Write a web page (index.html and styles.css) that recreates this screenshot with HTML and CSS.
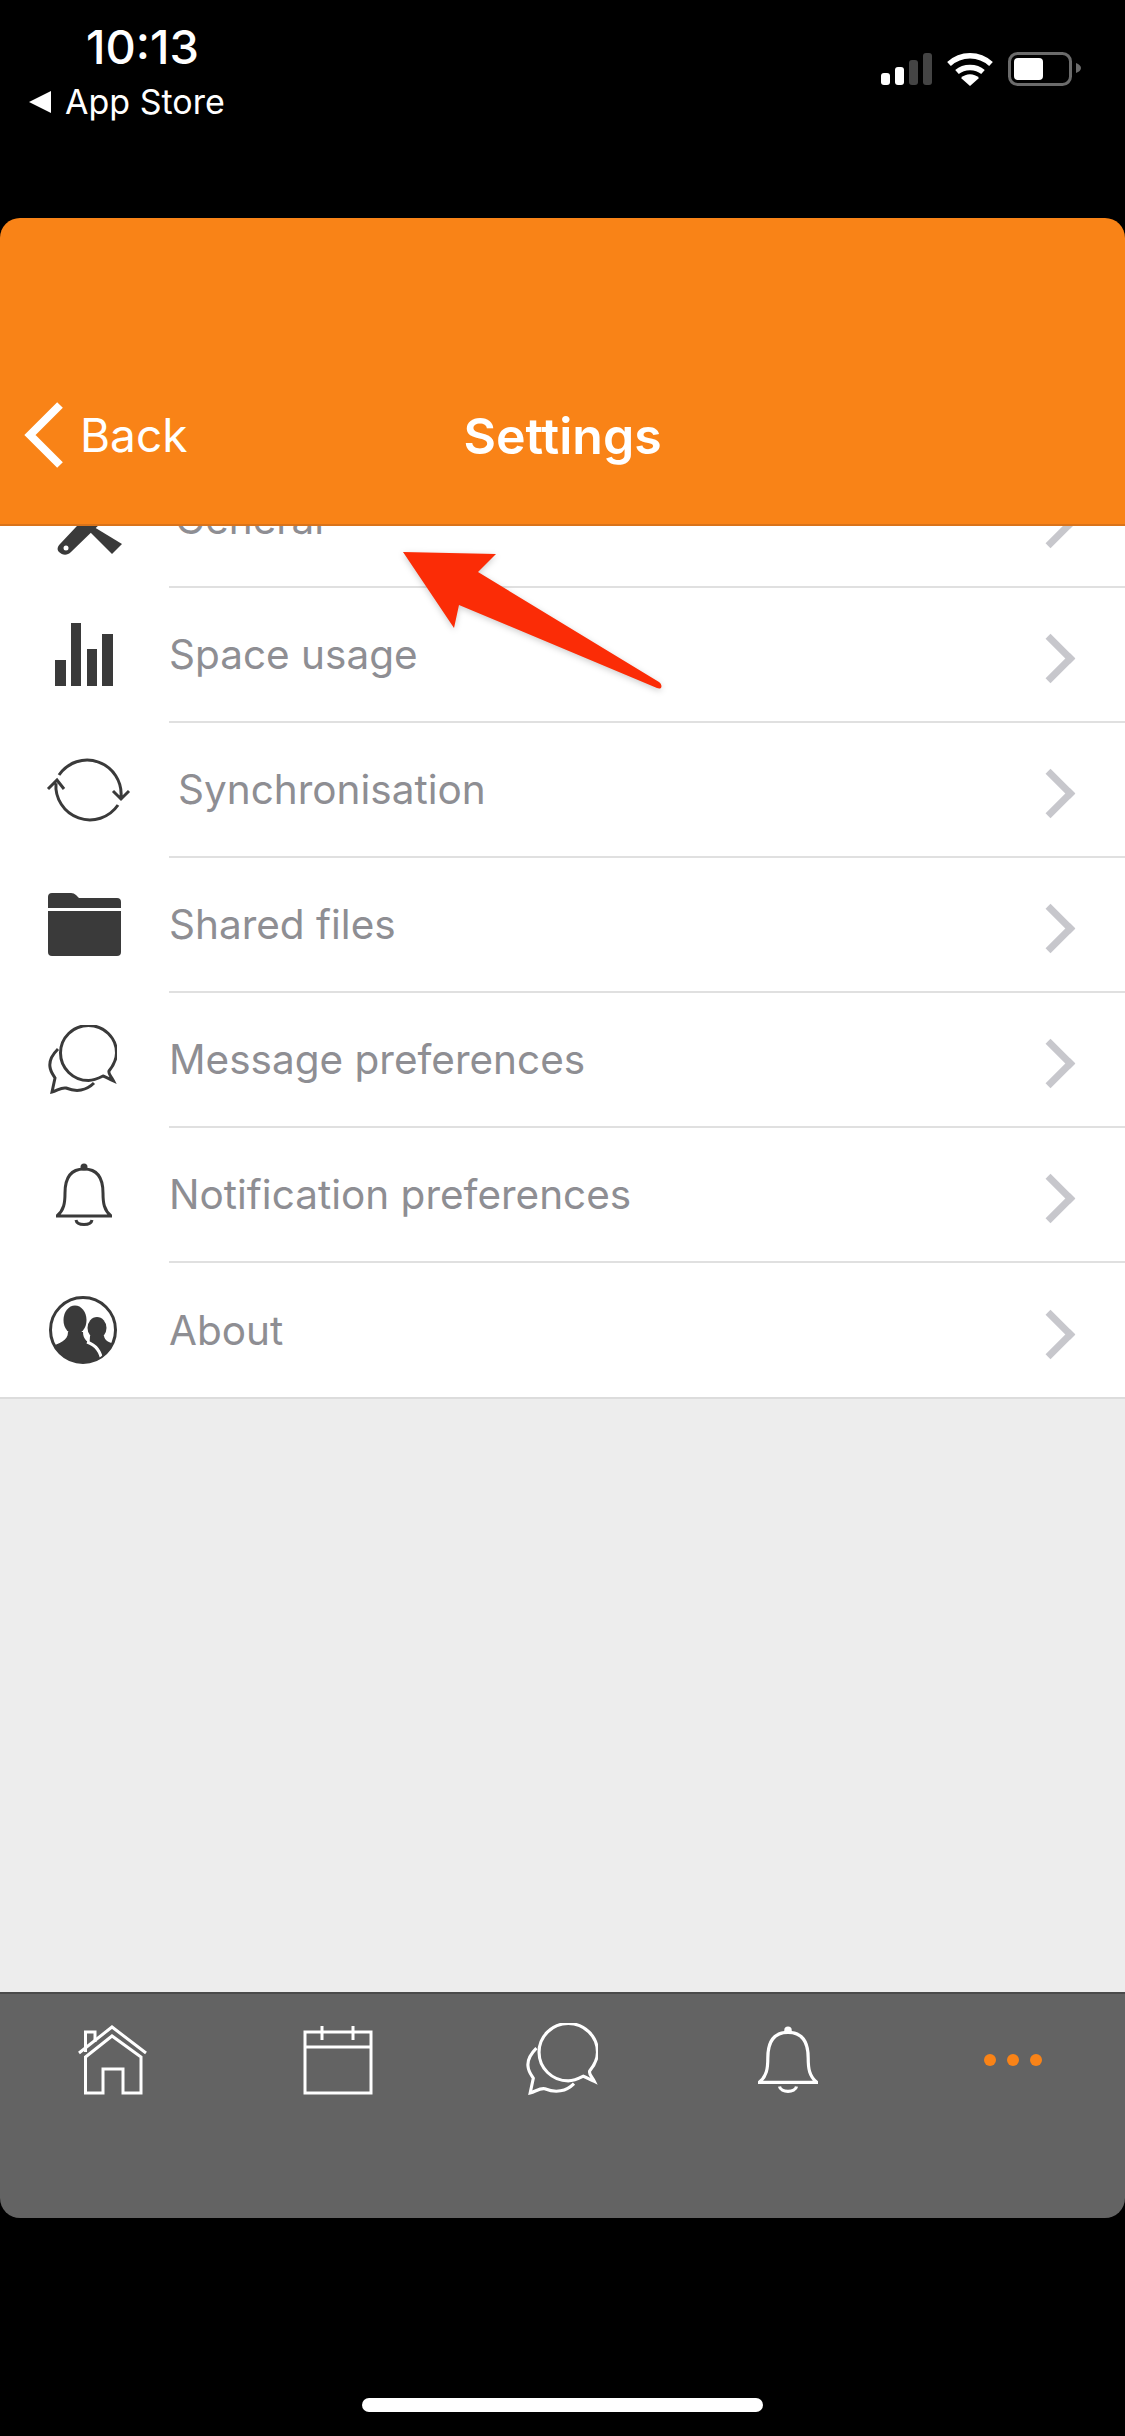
FILE: index.html
```html
<!DOCTYPE html>
<html lang="en">
<head>
  <meta charset="UTF-8">
  <title>Settings</title>
  <link rel="stylesheet" href="styles.css">
</head>
<body>

  <svg class="defs" width="0" height="0">
    <symbol id="msg" viewBox="-1 -1 69 69">
      <path d="M60 45C59 48 62 50 64.5 55C60 53 57 51 54 50C50 52 45 54.5 39.5 54.5A28 27.5 0 1 1 67.5 27C67.5 34 64 40 60 45Z"/>
      <path d="M9 23C3 29 0 35 1 41C1.5 46 5 50 6 52L3 66C8 65 12 61 17 62C22 64 27 65 32 64C37 63 42 60 45 57"/>
    </symbol>
    <symbol id="bell" viewBox="0 0 56 64">
      <path d="M1 53C8 47 9 40 9 30C9 14 15 6 28 6C41 6 47 14 47 30C47 40 48 47 55 53Z"/>
      <path d="M20 57C21 63 35 63 36 57"/>
      <circle class="solid" cx="28" cy="4" r="3.5"/>
    </symbol>
  </svg>

  <div class="telefono">
    <!-- Barra de estado -->
    <div class="estado">
      <div class="estado-izq">
        <div class="hora">10:13</div>
        <div class="volver-tienda"><span class="triangulo"></span>App Store</div>
      </div>
      <svg class="estado-iconos" viewBox="881 50 200 38">
        <rect x="881" y="73" width="9" height="12" rx="3" fill="#fff"/>
        <rect x="895" y="67" width="9" height="18" rx="3" fill="#fff"/>
        <rect x="909" y="60" width="9" height="25" rx="3" fill="#444"/>
        <rect x="923" y="53" width="9" height="32" rx="3" fill="#444"/>
        <path d="M949 64C961 53 979 53 991 64" fill="none" stroke="#fff" stroke-width="5.5"/>
        <path d="M957 72C964 66 976 66 983 72" fill="none" stroke="#fff" stroke-width="5.5"/>
        <path d="M961 78C966 73 974 73 979 78L970 86Z" fill="#fff"/>
        <rect x="1009.5" y="53.5" width="61" height="31" rx="8" fill="none" stroke="#6b6b6b" stroke-width="3"/>
        <rect x="1014" y="58" width="29" height="22" rx="4" fill="#fff"/>
        <path d="M1076 63C1079 64 1081 66 1081 68C1081 70 1079 72 1076 73Z" fill="#6b6b6b"/>
      </svg>
    </div>

    <!-- Cabecera -->
    <div class="cabecera">
      <div class="atras">
        <svg class="atras-flecha" viewBox="0 0 44 68">
          <path d="M38 4L8 34L38 64" fill="none" stroke="#fff" stroke-width="8"/>
        </svg>
        <span>Back</span>
      </div>
      <h1>Settings</h1>
    </div>

    <!-- Lista de ajustes, desplazada hacia arriba -->
    <div class="lista">
      <div class="lista-interior">
        <div class="fila">
          <svg class="fila-icono" viewBox="0 453 169 135">
            <path class="oscuro" d="M94 527L122 544L112 554L80 522Z"/>
            <path class="oscuro" d="M60 544L92 510L104 520L71 552C67 556 62 555 59 552C57 550 57 547 60 544Z"/>
            <circle cx="66" cy="548" r="2.5" fill="#fff"/>
          </svg>
          <div class="fila-texto fila-general"><span>General</span></div>
        </div>
        <div class="fila">
          <svg class="fila-icono" viewBox="0 588 169 135">
            <rect class="oscuro" x="55" y="660" width="11" height="26"/>
            <rect class="oscuro" x="71" y="623" width="10" height="63"/>
            <rect class="oscuro" x="87" y="649" width="10" height="37"/>
            <rect class="oscuro" x="102" y="634" width="11" height="52"/>
          </svg>
          <div class="fila-texto"><span>Space usage</span></div>
        </div>
        <div class="fila">
          <svg class="fila-icono" viewBox="0 723 169 135">
            <g class="linea fina">
              <path d="M59 775A34 34 0 0 1 121 797M113 791L121 799L129 791"/>
              <path d="M118 805A34 34 0 0 1 56 783M48 789L57 780L64 789"/>
            </g>
          </svg>
          <div class="fila-texto fila-sync"><span>Synchronisation</span></div>
        </div>
        <div class="fila">
          <svg class="fila-icono" viewBox="0 858 169 135">
            <path class="oscuro" d="M48 908V897Q48 893 52 893H71Q74 893 76 895L79 898H117Q121 898 121 902V908Z"/>
            <path class="oscuro" d="M48 911H121V952Q121 956 117 956H52Q48 956 48 952Z"/>
          </svg>
          <div class="fila-texto"><span>Shared files</span></div>
        </div>
        <div class="fila">
          <svg class="fila-icono" viewBox="0 993 169 135">
            <use class="linea fina" href="#msg" x="48" y="1025" width="69" height="69"/>
          </svg>
          <div class="fila-texto"><span>Message preferences</span></div>
        </div>
        <div class="fila">
          <svg class="fila-icono" viewBox="0 1128 169 135">
            <use class="linea fina" href="#bell" x="56" y="1163" width="56" height="64"/>
          </svg>
          <div class="fila-texto"><span>Notification preferences</span></div>
        </div>
        <div class="fila fila-ultima">
          <svg class="fila-icono" viewBox="0 1263 169 135">
            <defs>
              <clipPath id="recorte"><circle cx="83" cy="1330" r="32"/></clipPath>
            </defs>
            <circle class="linea fina" cx="83" cy="1330" r="32.5"/>
            <g clip-path="url(#recorte)">
              <ellipse class="oscuro" cx="97" cy="1328" rx="9.5" ry="11"/>
              <path class="oscuro" d="M90 1336H104C105 1342 112 1343 118 1346V1366H88Z"/>
              <ellipse class="oscuro" cx="75" cy="1320" rx="11.5" ry="14.5"/>
              <path class="oscuro" d="M68 1332H83C83 1340 88 1342 93 1345C98 1348 101 1354 101 1366H45V1350C52 1344 68 1344 68 1332Z"/>
              <path d="M87 1342C96 1345 101 1352 102 1362" fill="none" stroke="#fff" stroke-width="3"/>
            </g>
          </svg>
          <div class="fila-texto"><span>About</span></div>
        </div>
      </div>
    </div>

    <div class="vacio"></div>

    <!-- Barra de pestañas -->
    <div class="pestanas">
      <svg class="pestana" viewBox="62 2010 100 100">
        <g class="linea blanca">
          <path d="M78 2053L111 2027L145 2053"/>
          <path d="M84.500 2057L111 2036L140 2057V2093H122V2069H102V2093H84.500Z"/>
          <path d="M84.500 2052V2032H94V2042"/>
        </g>
      </svg>
      <svg class="pestana" viewBox="287 2010 100 100">
        <g class="linea blanca">
          <rect x="304" y="2032" width="66" height="61"/>
          <path d="M304 2047H370M321 2026V2040M352 2026V2040"/>
        </g>
      </svg>
      <svg class="pestana" viewBox="512 2010 100 100">
        <use class="linea blanca" href="#msg" x="525" y="2023" width="72" height="72"/>
      </svg>
      <svg class="pestana" viewBox="737 2010 100 100">
        <use class="linea blanca" href="#bell" x="757" y="2026" width="60" height="68"/>
      </svg>
      <svg class="pestana" viewBox="962 2010 100 100">
        <circle cx="989" cy="2060" r="6" fill="#f98317"/>
        <circle cx="1012" cy="2060" r="6" fill="#f98317"/>
        <circle cx="1035" cy="2060" r="6" fill="#f98317"/>
      </svg>
    </div>

    <div class="pie"><div class="inicio"></div></div>

    <!-- Flecha roja encima de la captura -->
    <svg class="flecha-roja" viewBox="0 0 280 160">
      <path d="M2 2L95 4L77 22L258 132C262 135 261 140 256 138L58 55L53 78Z" fill="#fb2c06"/>
    </svg>
  </div>

</body>
</html>
```

FILE: styles.css
```css
* {
  box-sizing: border-box;
}

body {
  margin: 0;
  background-color: #000;
  font-family: Inter, "Liberation Sans", sans-serif;
}

.defs {
  position: absolute;
}

.telefono {
  position: relative;
  display: flex;
  flex-direction: column;
  height: 2436px;
  overflow: hidden;
}

/* Barra de estado */
.estado {
  display: flex;
  justify-content: space-between;
  height: 218px;
  color: #fff;
}

.estado-izq {
  padding: 23px 0 0 29px;
}

.hora {
  margin-left: 57px;
  font-size: 47px;
  line-height: 48px;
  font-weight: 500;
}

.volver-tienda {
  display: flex;
  align-items: center;
  margin-top: 11px;
  font-size: 34px;
  line-height: 40px;
}

.triangulo {
  width: 0;
  height: 0;
  margin-right: 14px;
  border-top: 11px solid transparent;
  border-bottom: 11px solid transparent;
  border-right: 22px solid #fff;
}

.estado-iconos {
  width: 200px;
  height: 38px;
  margin: 50px 44px 0 0;
}

/* Cabecera */
.cabecera {
  position: relative;
  display: flex;
  align-items: center;
  justify-content: center;
  height: 308px;
  padding-top: 130px;
  padding-bottom: 0;
  background-color: #f98317;
  border-radius: 20px 20px 0 0;
  border-bottom: 2px solid #d9731a;
  color: #fff;
}

.cabecera h1 {
  margin: 0;
  font-size: 50px;
  font-weight: 600;
}

.atras {
  position: absolute;
  left: 22px;
  bottom: 55px;
  display: flex;
  align-items: center;
  gap: 14px;
  font-size: 46px;
}

.atras-flecha {
  width: 44px;
  height: 68px;
}

/* Lista */
.lista {
  height: 873px;
  overflow: hidden;
  background-color: #fff;
  border-bottom: 2px solid #dcdcdc;
}

.lista-interior {
  margin-top: -73px;
}

.fila {
  display: flex;
  height: 135px;
}

.fila-icono {
  flex: none;
  width: 169px;
  height: 135px;
}

.fila-texto {
  position: relative;
  flex: 1;
  display: flex;
  align-items: center;
  border-bottom: 2px solid #e0e0e0;
  color: #8e8e93;
  font-size: 40.5px;
}

.fila-texto::after {
  content: "";
  position: absolute;
  right: 57px;
  top: 50%;
  width: 28px;
  height: 28px;
  margin-top: -14px;
  border-top: 7px solid #c7c7cc;
  border-right: 7px solid #c7c7cc;
  transform: rotate(45deg);
}

.fila-general {
  padding-left: 6px;
}

.fila-sync {
  padding-left: 9px;
}

.fila-ultima .fila-texto {
  border-bottom: none;
}

/* Iconos */
.oscuro {
  fill: #3a3a3a;
}

.linea {
  fill: none;
  stroke: #3a3a3a;
  stroke-width: 4;
}

.linea.fina {
  stroke-width: 3;
  color: #3a3a3a;
}

.solid {
  fill: currentColor;
  stroke: none;
}

.linea.blanca {
  stroke: #fff;
  stroke-width: 3;
  color: #fff;
}

.vacio {
  flex: 1;
  background-color: #ededed;
}

/* Pestañas */
.pestanas {
  display: grid;
  grid-template-columns: repeat(5, 1fr);
  justify-items: center;
  align-items: start;
  height: 226px;
  padding-top: 16px;
  background-color: #636363;
  border-top: 2px solid #4a4a4a;
  border-radius: 0 0 20px 20px;
}

.pestana {
  width: 100px;
  height: 100px;
}

.pie {
  display: flex;
  justify-content: center;
  height: 218px;
  padding-top: 180px;
}

.inicio {
  width: 401px;
  height: 14px;
  background-color: #fff;
  border-radius: 7px;
}

.flecha-roja {
  position: absolute;
  left: 401px;
  top: 550px;
  width: 280px;
  height: 160px;
  filter: drop-shadow(0 2px 3px rgba(0,0,0,0.2));
}
```
